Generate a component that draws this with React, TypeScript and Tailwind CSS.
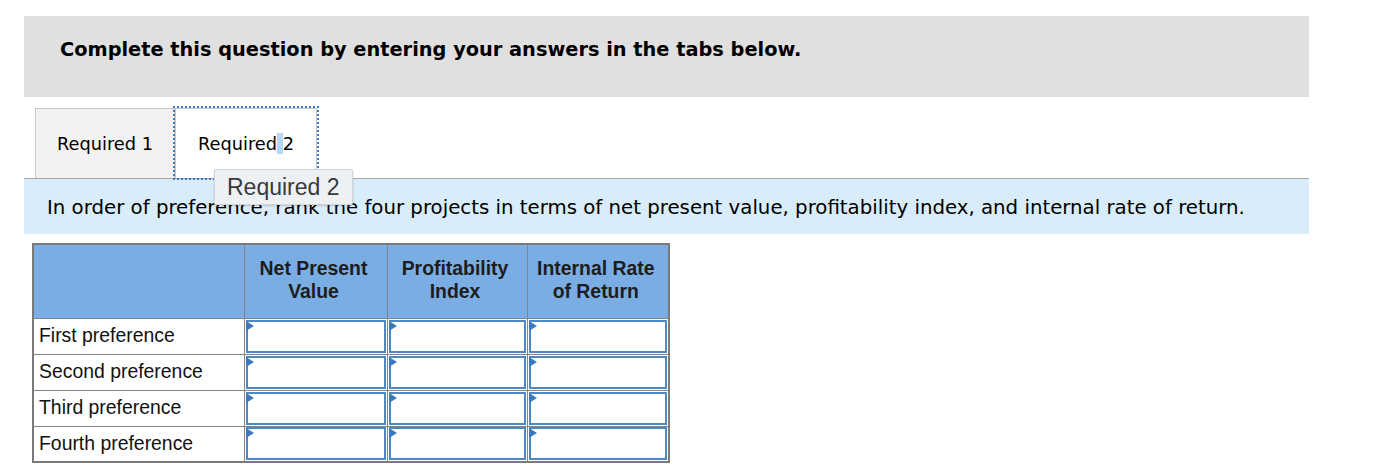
import React from "react";

const rows = ["First preference", "Second preference", "Third preference", "Fourth preference"];

function AnswerCell() {
  return (
    <td className="border border-[#858585] p-0 h-[36px]">
      <div className="relative mx-px h-[33px] border-2 border-[#4e87c5] bg-white">
        <svg className="absolute -left-[2px] -top-[1px]" width="9" height="11" viewBox="0 0 9 11">
          <polygon points="0,0 8,5 0,10" fill="#3a78c0" />
        </svg>
      </div>
    </td>
  );
}

export default function App() {
  return (
    <div className="relative min-h-[476px] bg-white pt-4 pl-6 font-['DejaVu_Sans',Verdana,sans-serif] text-black">
      <div className="h-[81px] w-[1285px] bg-[#e0e0e0] pl-9 pt-[22px]">
        <p className="text-[19.35px] font-bold leading-[24px]">Complete this question by entering your answers in the tabs below.</p>
      </div>

      <div className="mt-[11px] flex w-[1285px] items-end border-b border-[#a6a6a6] pl-[11px]">
        <div className="flex h-[70px] w-[140px] items-center justify-center border border-b-0 border-[#c6c6c6] bg-[#f2f2f2] pt-[2px] text-[17.8px]">
          Required 1
        </div>
        <div className="relative flex h-[70px] w-[142px] items-center justify-center border border-b-0 border-[#c6c6c6] bg-white pt-[2px] text-[17.8px] outline-2 outline-dotted outline-[#3b7cc9] outline-offset-0">
          <span>
            Required<span className="bg-[#b6d6f6]">&nbsp;</span>2
          </span>
        </div>
      </div>

      <div className="flex h-[55px] w-[1285px] items-center bg-[#d9ecf9] pl-[23px] pt-[3px] text-[19.75px]">
        In order of preference, rank the four projects in terms of net present value, profitability index, and internal rate of return.
      </div>

      <div className="absolute left-[214px] top-[169px] rounded-[2px] border border-[#cfd3d6] bg-[#eef1f3] px-[12px] py-[3px] font-['Liberation_Sans',Arial,sans-serif] text-[23px] leading-[28px] text-[#363a3d] shadow-[0_1px_2px_rgba(0,0,0,0.15)]">
        Required 2
      </div>

      <table className="ml-2 mt-[9px] border-collapse border-2 border-[#7a7a7a] font-['Liberation_Sans',Arial,sans-serif] text-[19.4px]">
        <thead>
          <tr className="h-[74px] bg-[#7aade3]">
            <th className="w-[211px] border border-[#858585]"></th>
            <th className="w-[143px] border border-[#858585] align-top pt-[12px] pr-[4px] font-bold leading-[23px] text-[#1d1d1d]">
              Net Present
              <br />
              Value
            </th>
            <th className="w-[140px] border border-[#858585] align-top pt-[12px] pr-[4px] font-bold leading-[23px] text-[#1d1d1d]">
              Profitability
              <br />
              Index
            </th>
            <th className="w-[142px] border border-[#858585] align-top pt-[12px] pr-[4px] font-bold leading-[23px] text-[#1d1d1d]">
              Internal Rate
              <br />
              of Return
            </th>
          </tr>
        </thead>
        <tbody>
          {rows.map((label) => (
            <tr key={label}>
              <td className="border border-[#858585] px-[5px] text-left align-middle text-[#111]">{label}</td>
              <AnswerCell />
              <AnswerCell />
              <AnswerCell />
            </tr>
          ))}
        </tbody>
      </table>
    </div>
  );
}
